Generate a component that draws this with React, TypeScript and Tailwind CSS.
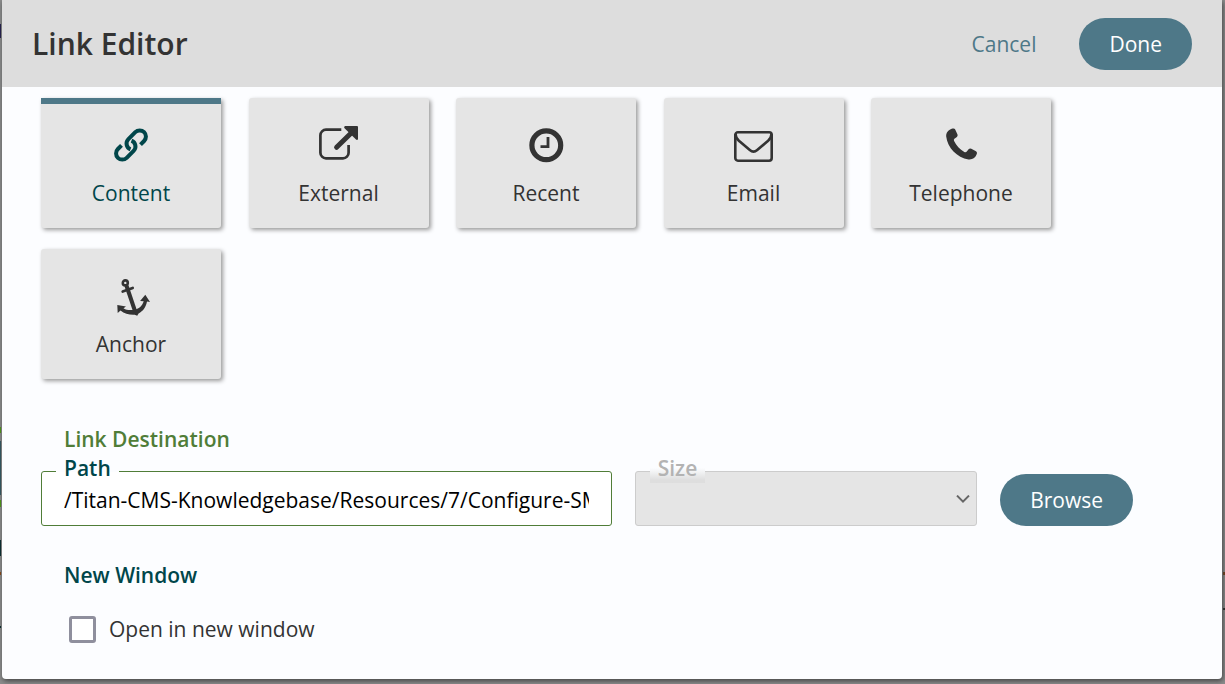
import React, { useState } from "react";

type IconProps = { children: React.ReactNode; width: number; height: number };

function Icon({ children, width, height }: IconProps) {
  return (
    <svg
      width={width}
      height={height}
      viewBox={`0 0 ${width} ${height}`}
      fill="none"
      stroke="currentColor"
      aria-hidden="true"
      className="overflow-visible"
    >
      {children}
    </svg>
  );
}

const LinkIcon = () => (
  <Icon width={34} height={34}>
    <g strokeWidth="4">
      <path d="M26.5 16.6L30.1 13A6.2 6.2 0 0 0 21.3 4.2L14.4 11.1A6.2 6.2 0 0 0 16.5 21.3" />
      <path d="M7.5 17.4L3.9 21A6.2 6.2 0 0 0 12.7 29.8L19.6 22.9A6.2 6.2 0 0 0 17.5 12.7" />
    </g>
  </Icon>
);

const ExternalIcon = () => (
  <Icon width={39} height={38}>
    <path
      strokeWidth="2.7"
      d="M22.3 3.7H7A5.6 5.6 0 0 0 1.4 9.3V26.7A5.6 5.6 0 0 0 7 32.3H24A5.6 5.6 0 0 0 29.6 26.7V19"
    />
    <path strokeWidth="5" strokeLinecap="round" d="M17.6 21.3L33 6.2" />
    <path
      fill="currentColor"
      stroke="none"
      d="M26 0H38Q39 0 39 1V13.2Q38.2 14.4 37 13.6L25.3 2Q24.6 .8 26 0Z"
    />
  </Icon>
);

const ClockIcon = () => (
  <Icon width={34} height={34}>
    <circle cx="17.3" cy="17.3" r="14.4" strokeWidth="5.2" />
    <path strokeWidth="2.8" d="M19 9V18.7H11.5" />
  </Icon>
);

const MailIcon = () => (
  <Icon width={39} height={29}>
    <rect x="1.3" y="1.3" width="36.4" height="28.4" rx="2.6" strokeWidth="2.6" />
    <path
      strokeWidth="2.6"
      d="M1.5 3C1.8 7.5 3.5 8.6 5.5 10.3L15.8 19Q19.5 22.2 23.2 19L33.5 10.3C35.5 8.6 37.2 7.5 37.5 3"
    />
  </Icon>
);

const PhoneIcon = () => (
  <Icon width={31} height={34}>
    <path
      fill="currentColor"
      stroke="none"
      d="M6.5 .6Q8.4 0 9.2 1.4L11.5 6.6Q12 8 10.9 8.9L8.4 10.7Q7.4 11.5 8.1 13C10.3 17.5 13.8 21.5 18.3 24Q19.8 24.7 20.8 23.6L22.8 21Q23.8 20 25.3 20.7L30 23.2Q31.3 24 30.9 25.8C29.5 30 26.5 31.8 22.5 31.4C11 29.8 1.4 19.5 .2 8.5C-.1 4.5 2.5 1.8 6.5 .6Z"
    />
  </Icon>
);

const AnchorIcon = () => (
  <Icon width={29} height={35}>
    <circle cx="8.3" cy="3.9" r="2.5" strokeWidth="2.6" />
    <path strokeWidth="2.7" strokeLinecap="round" d="M5.7 12.5L15.7 9" />
    <path strokeWidth="4" d="M9.4 6.5L18.5 33.5" />
    <path
      fill="currentColor"
      stroke="none"
      d="M.3 25.9L9 27.4L6.5 29.2C9.5 31.3 13 31.3 17.5 30.8C22.5 29.5 25.3 26.5 26.7 22.2L23.1 22L28.3 15.8L33 23L30 22.6C28.7 28.6 26.3 32.2 21.6 34.4L20.2 36.8L17.8 35.7C12.5 36 7.5 34.8 3.5 31.5L.7 34Z"
    />
  </Icon>
);

const linkTypes = [
  { name: "Content", icon: LinkIcon },
  { name: "External", icon: ExternalIcon },
  { name: "Recent", icon: ClockIcon },
  { name: "Email", icon: MailIcon },
  { name: "Telephone", icon: PhoneIcon },
  { name: "Anchor", icon: AnchorIcon },
];

export default function App() {
  const [selected, setSelected] = useState("Content");
  const [path, setPath] = useState("/Titan-CMS-Knowledgebase/Resources/7/Configure-SMTP");

  return (
    <div className="flex min-h-screen flex-col bg-[#8b8c8c] bg-[linear-gradient(transparent_24px,#1e1a4a_24px_38px,transparent_38px_427px,#4a9a10_427px_433px,transparent_433px_441px,#2e5560_441px_495px,transparent_495px_500px,#4a9a10_500px_507px,transparent_507px_540px,#00282c_540px_556px,transparent_556px_572px,#8a4510_572px_575px,transparent_575px_626px,#00282c_626px_628px,transparent_628px),linear-gradient(transparent_572px,#6f3a10_572px_575px,transparent_575px_608px,#222222_608px_610px,transparent_610px)] bg-[size:1px_100%,2px_100%] bg-[position:left_top,right_top] bg-no-repeat pr-[3px] pb-[5px] pl-[2px] font-['Open_Sans',sans-serif] text-[21px] leading-[30px] text-[#333333]">
      <main className="flex-1 rounded-b-sm bg-[#fcfdff] shadow-[1px_2px_5px_#444444]">
        <header className="flex h-[87px] items-center justify-between bg-[#dddddd] pr-[30px] pl-[30px]">
          <h1 className="text-[30px] leading-[40px] font-semibold">Link Editor</h1>
          <div className="flex items-center gap-[43px]">
            <button type="button" className="text-[#4e7888]">
              Cancel
            </button>
            <button type="button" className="h-[52px] rounded-full bg-[#4e7888] px-[30px] text-white">
              Done
            </button>
          </div>
        </header>

        <div className="pt-[11px] pr-[89px] pb-8 pl-[39px]">
          <div className="grid max-w-[1010px] grid-cols-[repeat(auto-fill,180px)] justify-between gap-y-[21px]">
            {linkTypes.map(({ name, icon: TypeIcon }) => (
              <button
                key={name}
                type="button"
                aria-pressed={selected === name}
                onClick={() => setSelected(name)}
                className={
                  selected === name
                    ? "flex h-[130px] flex-col items-center rounded-b-[3px] border-t-[6px] border-[#4e7888] bg-[#e5e5e5] pt-[17px] text-[#00464a] shadow-[2px_2px_4px_#999999]"
                    : "flex h-[130px] flex-col items-center rounded-[3px] bg-[#e5e5e5] pt-[23px] shadow-[2px_2px_4px_#999999]"
                }
              >
                <span className="flex h-12 items-center justify-center">
                  <TypeIcon />
                </span>
                <span className="mt-[9px]">{name}</span>
              </button>
            ))}
          </div>

          <h2 className="mt-[45px] pl-[23px] font-semibold text-[#507d38]">Link Destination</h2>
          <div className="mt-[17px] flex items-end gap-[23px]">
            <div className="relative min-w-0 flex-[5]">
              <label
                htmlFor="path"
                className="absolute -top-[18px] left-[15px] px-2 leading-[30px] font-semibold text-[#00464a] [background:linear-gradient(#fcfdff_65%,#ffffff_65%)]"
              >
                Path
              </label>
              <input
                id="path"
                type="text"
                value={path}
                onChange={(e) => setPath(e.target.value)}
                className="block h-[55px] w-full rounded-[3px] border border-[#507d38] bg-white px-[22px] pt-[2px] text-black outline-none"
              />
            </div>
            <div className="relative min-w-0 flex-[3]">
              <label
                htmlFor="size"
                className="absolute -top-[18px] left-[15px] bg-linear-to-b from-[#fcfdff] from-50% to-[#dedede] to-90% px-2 leading-[30px] font-semibold text-[#b3b3b3]"
              >
                Size
              </label>
              <select
                id="size"
                disabled
                className="block h-[55px] w-full appearance-none rounded-[3px] border border-[#cccccc] bg-[#e5e5e5] px-[22px]"
              />
              <svg
                width="14"
                height="9"
                viewBox="0 0 14 9"
                fill="none"
                stroke="#666666"
                strokeWidth="2"
                aria-hidden="true"
                className="pointer-events-none absolute top-6 right-[7px]"
              >
                <path d="M1 .6L7 6.6L13 .6" />
              </svg>
            </div>
            <button type="button" className="h-[52px] rounded-full bg-[#4e7888] px-[30px] text-white">
              Browse
            </button>
          </div>

          <h2 className="mt-[34px] pl-[23px] font-semibold text-[#00464a]">New Window</h2>
          <label className="mt-6 flex items-center gap-[13px] pl-7">
            <input
              type="checkbox"
              className="size-[27px] appearance-none rounded-[3px] border-[3px] border-[#8f8f9d] bg-white checked:bg-[#4e7888]"
            />
            Open in new window
          </label>
        </div>
      </main>
    </div>
  );
}
